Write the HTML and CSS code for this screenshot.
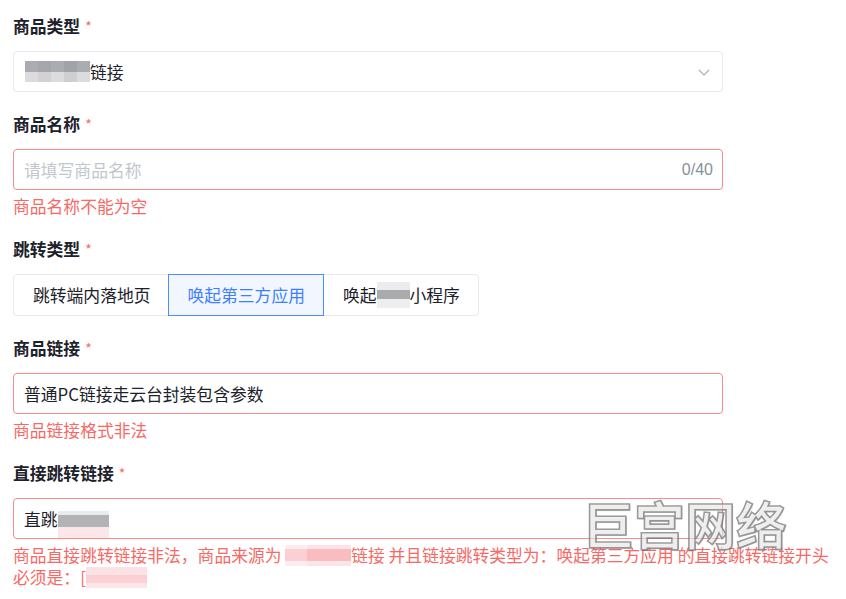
FILE: index.html
```html
<!DOCTYPE html>
<html>
<head>
    <meta charset="utf-8">
    <title>商品信息</title>
    <link rel="stylesheet" href="styles.css">
</head>
<body>
    <form class="goodsForm">
        <div class="formItem">
            <div class="formLabel">商品类型<span class="req">*</span></div>
            <div class="selectBox">
                <span class="selectValue"><span class="mosaic mosaicGrey"></span>链接</span>
                <svg class="chevron" width="14" height="14" viewBox="0 0 14 14"><path d="M2 5 L7 10 L12 5" fill="none" stroke="#a9aeb8" stroke-width="1.2"/></svg>
            </div>
        </div>

        <div class="formItem">
            <div class="formLabel">商品名称<span class="req">*</span></div>
            <div class="inputBox hasError">
                <span class="placeholder">请填写商品名称</span>
                <span class="counter">0/40</span>
            </div>
            <div class="errorMsg">商品名称不能为空</div>
        </div>

        <div class="formItem">
            <div class="formLabel">跳转类型<span class="req">*</span></div>
            <div class="radioGroup">
                <div class="radioBtn">跳转端内落地页</div>
                <div class="radioBtn checked">唤起第三方应用</div>
                <div class="radioBtn">唤起<span class="mosaic mosaicGreySmall"></span>小程序</div>
            </div>
        </div>

        <div class="formItem">
            <div class="formLabel">商品链接<span class="req">*</span></div>
            <div class="inputBox hasError">
                <span class="value">普通PC链接走云台封装包含参数</span>
            </div>
            <div class="errorMsg">商品链接格式非法</div>
        </div>

        <div class="formItem">
            <div class="formLabel">直接跳转链接<span class="req">*</span></div>
            <div class="inputBox hasError">
                <span class="value">直跳<span class="mosaic mosaicInput"></span></span>
            </div>
            <div class="errorMsg">商品直接跳转链接非法，商品来源为 <span class="mosaic mosaicPink"></span>链接 并且链接跳转类型为：唤起第三方应用 的直接跳转链接开头必须是：[<span class="mosaic mosaicPink2"></span></div>
        </div>

        <div class="watermark">巨宫网络</div>
    </form>
</body>
</html>
```

FILE: styles.css
```css
body {
    margin: 0;
    padding: 14px 0 0 13px;
    background: #fff;
    font-family: "Noto Sans CJK SC", "Noto Sans", sans-serif;
    font-size: 16.8px;
    color: #1d2129;
}

.goodsForm {
    position: relative;
    width: 828px;
}

.formItem {
    margin-bottom: 20px;
}

.formLabel {
    height: 24px;
    line-height: 24px;
    margin-bottom: 13px;
    font-weight: 700;
    color: #1d2129;
}

.req {
    color: #f76965;
    font-weight: 400;
    font-size: 14px;
    margin-left: 5px;
    vertical-align: 1px;
}

.selectBox,
.inputBox {
    box-sizing: border-box;
    width: 710px;
    height: 41px;
    border: 1px solid #e8e9ee;
    border-radius: 4px;
    display: flex;
    align-items: center;
    padding: 0 9px 0 10px;
}

.selectBox {
    justify-content: space-between;
    padding-left: 11px;
}

.selectValue {
    display: flex;
    align-items: center;
    color: #1d2129;
}

.chevron {
    margin-right: 2px;
}

.inputBox.hasError {
    border-color: #f88c88;
    justify-content: space-between;
}

.placeholder {
    color: #c2c6cd;
}

.counter {
    color: #86909c;
    font-family: "Liberation Sans", Arial, sans-serif;
    font-size: 16px;
}

.value {
    display: flex;
    align-items: center;
    color: #1d2129;
}

.errorMsg {
    margin-top: 5px;
    line-height: 22px;
    color: #f76965;
}

.radioGroup {
    display: inline-flex;
    height: 42px;
    box-sizing: border-box;
    border: 1px solid #e8e9ee;
    border-radius: 4px;
}

.radioBtn {
    display: flex;
    align-items: center;
    padding: 0 18px 0 19px;
    color: #1d2129;
    box-sizing: border-box;
}

.radioBtn.checked {
    margin: -1px 0;
    border: 1px solid #4c8cff;
    background: #f2f7ff;
    color: #3d7fff;
    padding: 0 18px;
}

.mosaic {
    display: inline-block;
}

.mosaicGrey {
    width: 65px;
    height: 21px;
    background:
        linear-gradient(90deg, rgba(0,0,0,0) 0 13px, rgba(120,80,90,0.08) 13px 26px, rgba(0,0,0,0) 26px 39px, rgba(60,40,50,0.08) 39px 52px, rgba(0,0,0,0) 52px),
        linear-gradient(180deg, #a9adb3 0 11px, #dcdcdf 11px);
}

.mosaicGreySmall {
    width: 33px;
    height: 26px;
    background:
        linear-gradient(180deg, #ececee 0 8px, #aaabad 8px 17px, #eeeeef 17px);
}

.mosaicInput {
    width: 51px;
    height: 27px;
    margin-top: 11px;
    background:
        linear-gradient(180deg, #e9ecec 0 4px, #b3b3b6 4px 16px, #fbe7ea 16px);
}

.mosaicPink {
    width: 66px;
    height: 21px;
    vertical-align: -4px;
    background:
        linear-gradient(90deg, rgba(255,255,255,0.3) 0 22px, rgba(0,0,0,0) 22px),
        linear-gradient(180deg, #fde3e6 0 4px, #f9bcc1 4px 16px, #fde4e6 16px);
}

.mosaicPink2 {
    width: 61px;
    height: 21px;
    vertical-align: -4px;
    background:
        linear-gradient(180deg, #fde2e5 0 8px, #fbd0d5 8px 16px, #fde6e8 16px);
}

.watermark {
    position: absolute;
    left: 570px;
    top: 484px;
    font-size: 51px;
    font-weight: 700;
    line-height: 1;
    color: rgba(255, 255, 255, 0.55);
    -webkit-text-stroke: 1.6px rgba(120, 120, 120, 0.75);
    text-shadow: 1px 1px 1px rgba(0, 0, 0, 0.15);
    pointer-events: none;
}
```
